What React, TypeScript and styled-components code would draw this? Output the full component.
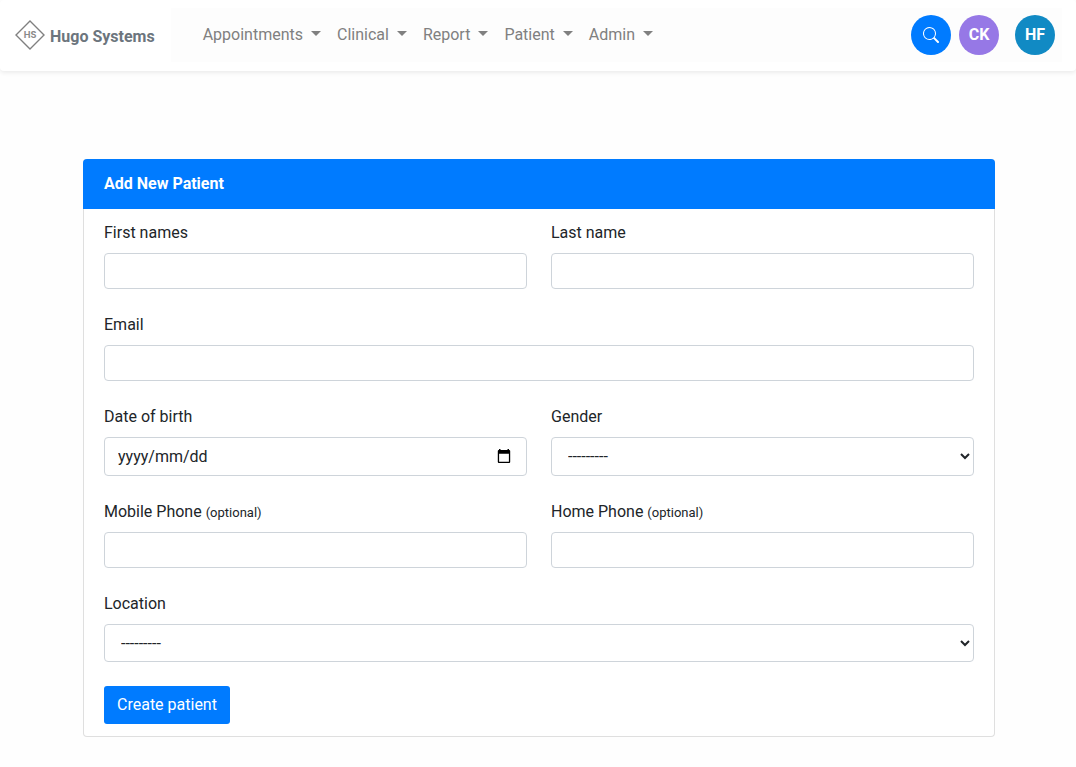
import React from "react";
import styled, { createGlobalStyle } from "styled-components";
import { BsSearch } from "react-icons/bs";

const GlobalStyle = createGlobalStyle`
  *, *::before, *::after { box-sizing: border-box; }
  body {
    margin: 0;
    background: #fefefe;
    color: #212529;
    font: 400 16px/24px Roboto, "Liberation Sans", sans-serif;
  }
  input, select, button { font: inherit; color: inherit; }
`;

const Header = styled.header`
  display: flex;
  align-items: center;
  gap: 16px;
  padding: 8px 14px 9px;
  background: #fff;
  border-radius: 4px;
  box-shadow: 0 2px 4px rgba(0, 0, 0, 0.075);
`;

const Brand = styled.a`
  display: flex;
  align-items: center;
  gap: 4px;
  color: #6c757d;
  font-weight: 700;
  text-decoration: none;
  white-space: nowrap;
`;

const BrandName = styled.span`
  padding-top: 4px;
`;

const NavBar = styled.nav`
  display: flex;
  flex: 1;
  align-items: center;
  justify-content: space-between;
  height: 54px;
  padding: 0 7px 0 24px;
  background: #fdfdfd;
`;

const Menus = styled.ul`
  display: flex;
  margin: 0;
  padding: 0;
  list-style: none;
`;

const MenuButton = styled.button`
  display: flex;
  align-items: center;
  gap: 8px;
  padding: 8px;
  border: 0;
  background: none;
  color: #808080;
  cursor: pointer;

  &::after {
    content: "";
    margin-bottom: 3px;
    border: 5px solid transparent;
    border-top-color: currentColor;
    border-bottom: 0;
  }
`;

const Actions = styled.div`
  display: flex;
  gap: 16px;
`;

const ActionGroup = styled.div`
  display: flex;
  gap: 8px;
`;

const RoundButton = styled.button<{ $color: string }>`
  display: flex;
  align-items: center;
  justify-content: center;
  width: 40px;
  height: 40px;
  padding: 0;
  border: 0;
  border-radius: 50%;
  background: ${({ $color }) => $color};
  color: #fff;
  font-weight: 700;
  cursor: pointer;
`;

const Page = styled.main`
  max-width: 962px;
  margin: 0 auto;
  padding: 88px 24px 30px 26px;
`;

const Card = styled.section`
  border: 1px solid #dfdfdf;
  border-top: 0;
  border-radius: 4px;
  background: #fff;
`;

const CardTitle = styled.h1`
  margin: 0 -1px;
  padding: 13px 21px;
  border-radius: 4px 4px 0 0;
  background: #007bff;
  color: #fff;
  font-size: 16px;
  font-weight: 700;
`;

const Form = styled.form`
  display: grid;
  grid-template-columns: 1fr 1fr;
  gap: 24px;
  padding: 12px 20px;
`;

const FieldBox = styled.div<{ $wide?: boolean }>`
  display: flex;
  flex-direction: column;
  gap: 8px;
  min-width: 0;
  grid-column: ${({ $wide }) => ($wide ? "1 / -1" : "auto")};
`;

const Optional = styled.small`
  font-size: 13px;
  line-height: 16px;
`;

const Input = styled.input<{ $height?: number }>`
  width: 100%;
  height: ${({ $height = 36 }) => $height}px;
  padding: 6px 13px;
  border: 1px solid #ced4da;
  border-radius: 4px;
  background: #fff;

  &::placeholder { color: #212529; opacity: 1; }
`;

const Select = styled.select<{ $height: number }>`
  width: 100%;
  height: ${({ $height }) => $height}px;
  padding: 6px 12px;
  border: 1px solid #ced4da;
  border-radius: 4px;
  background: #fff;
`;

const DateBox = styled.div`
  position: relative;
`;

const PickerButton = styled.button`
  position: absolute;
  top: 0;
  bottom: 0;
  right: 14px;
  display: flex;
  align-items: center;
  padding: 0 2px;
  border: 0;
  background: none;
  color: #000;
`;

const SubmitButton = styled.button`
  justify-self: start;
  height: 38px;
  padding: 0 13px;
  border: 0;
  border-radius: 3px;
  background: #007bff;
  color: #fff;
  cursor: pointer;
`;

const Logo = () => (
  <svg width="32" height="32" viewBox="0 0 32 32" aria-hidden="true">
    <path d="M16 2 30 16 16 30 2 16Z" fill="none" stroke="#808080" strokeWidth="1.4" />
    <text x="16" y="19" textAnchor="middle" fontFamily="Inter, sans-serif" fontSize="9" fontWeight="700" fill="#8a8a8a">
      HS
    </text>
  </svg>
);

const CalendarIcon = () => (
  <svg width="14" height="15" viewBox="0 0 14 15" aria-hidden="true">
    <path
      d="M2 0h1.5v1h7V0H12v1h.2a1 1 0 0 1 1 1v11a1 1 0 0 1-1 1H1.8a1 1 0 0 1-1-1V2a1 1 0 0 1 1-1H2ZM2.1 4.7v8h9.8v-8Z"
      fill="currentColor"
      fillRule="evenodd"
    />
  </svg>
);

type FieldProps = {
  id: string;
  label: string;
  optional?: boolean;
  wide?: boolean;
  children?: React.ReactNode;
};

const Field = ({ id, label, optional, wide, children }: FieldProps) => (
  <FieldBox $wide={wide}>
    <label htmlFor={id}>
      {label} {optional && <Optional>(optional)</Optional>}
    </label>
    {children ?? <Input id={id} name={id} />}
  </FieldBox>
);

const menus = ["Appointments", "Clinical", "Report", "Patient", "Admin"];

export default function App() {
  return (
    <>
      <GlobalStyle />
      <Header>
        <Brand href="#">
          <Logo />
          <BrandName>Hugo Systems</BrandName>
        </Brand>
        <NavBar aria-label="Main">
          <Menus>
            {menus.map((name) => (
              <li key={name}>
                <MenuButton type="button" aria-haspopup="menu">{name}</MenuButton>
              </li>
            ))}
          </Menus>
          <Actions>
            <ActionGroup>
              <RoundButton type="button" $color="#007bff" aria-label="Search">
                <BsSearch size={16} />
              </RoundButton>
              <RoundButton type="button" $color="#9678e6">CK</RoundButton>
            </ActionGroup>
            <RoundButton type="button" $color="#118ac4">HF</RoundButton>
          </Actions>
        </NavBar>
      </Header>
      <Page>
        <Card>
          <CardTitle>Add New Patient</CardTitle>
          <Form onSubmit={(event) => event.preventDefault()}>
            <Field id="first-names" label="First names" />
            <Field id="last-name" label="Last name" />
            <Field id="email" label="Email" wide />
            <Field id="birth-date" label="Date of birth">
              <DateBox>
                <Input id="birth-date" name="birth-date" placeholder="yyyy/mm/dd" $height={39} />
                <PickerButton type="button" aria-label="Choose date">
                  <CalendarIcon />
                </PickerButton>
              </DateBox>
            </Field>
            <Field id="gender" label="Gender">
              <Select id="gender" name="gender" $height={39}>
                <option value="">---------</option>
              </Select>
            </Field>
            <Field id="mobile-phone" label="Mobile Phone" optional />
            <Field id="home-phone" label="Home Phone" optional />
            <Field id="location" label="Location" wide>
              <Select id="location" name="location" $height={38}>
                <option value="">---------</option>
              </Select>
            </Field>
            <SubmitButton type="submit">Create patient</SubmitButton>
          </Form>
        </Card>
      </Page>
    </>
  );
}
